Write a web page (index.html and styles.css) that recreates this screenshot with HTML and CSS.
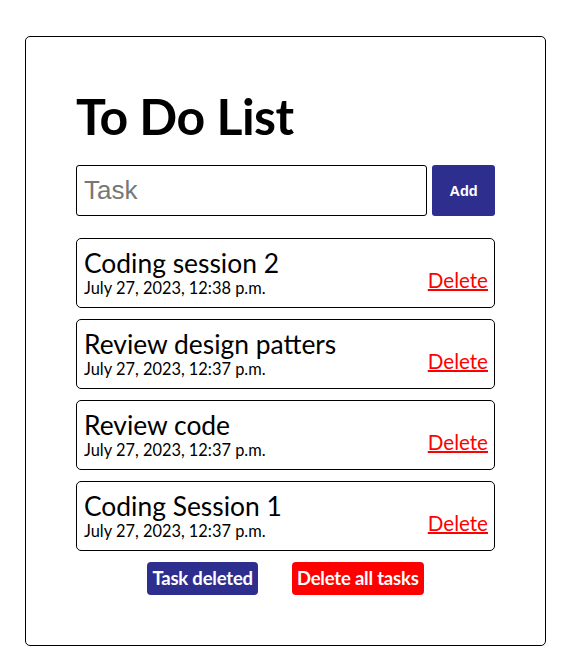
FILE: index.html
```html
<!DOCTYPE html>
<html>
<head>
<meta charset="utf-8">
<link rel="stylesheet" href="styles.css">
</head>
<body>
<div class="card">
  <h1 class="title">To Do List</h1>
  <form class="add-form">
    <input class="task-input" type="text" placeholder="Task">
    <button class="add-btn" type="button">Add</button>
  </form>
  <ul class="tasks">
    <li class="task">
      <div class="task-info">
        <div class="task-name">Coding session 2</div>
        <div class="task-date">July 27, 2023, 12:38 p.m.</div>
      </div>
      <a class="delete" href="#">Delete</a>
    </li>
    <li class="task">
      <div class="task-info">
        <div class="task-name">Review design patters</div>
        <div class="task-date">July 27, 2023, 12:37 p.m.</div>
      </div>
      <a class="delete" href="#">Delete</a>
    </li>
    <li class="task">
      <div class="task-info">
        <div class="task-name">Review code</div>
        <div class="task-date">July 27, 2023, 12:37 p.m.</div>
      </div>
      <a class="delete" href="#">Delete</a>
    </li>
    <li class="task">
      <div class="task-info">
        <div class="task-name">Coding Session 1</div>
        <div class="task-date">July 27, 2023, 12:37 p.m.</div>
      </div>
      <a class="delete" href="#">Delete</a>
    </li>
  </ul>
  <div class="actions">
    <span class="badge badge-blue">Task deleted</span>
    <span class="badge badge-red">Delete all tasks</span>
  </div>
</div>
</body>
</html>
```
FILE: styles.css
```css
html, body {
  margin: 0;
  padding: 0;
  background: #fff;
}
body {
  font-family: Lato, "Noto Sans", sans-serif;
  color: #000;
  padding: 36px 0 0 25px;
}
.card {
  box-sizing: border-box;
  width: 521px;
  height: 610px;
  border: 1px solid #000;
  border-radius: 5px;
  padding: 47px 50px 0 50px;
}
.title {
  margin: 0;
  font-size: 50px;
  font-weight: 700;
  line-height: 64px;
  letter-spacing: -0.5px;
}
.add-form {
  display: flex;
  gap: 5px;
  margin-top: 17px;
}
.task-input {
  box-sizing: border-box;
  flex: 1;
  height: 51px;
  border: 1px solid #000;
  border-radius: 3px;
  padding: 0 7px;
  font-family: "Liberation Sans", Arial, sans-serif;
  font-size: 26px;
  outline: none;
}
.task-input::placeholder {
  color: #777;
}
.add-btn {
  width: 63px;
  height: 51px;
  border: none;
  border-radius: 3px;
  background: #2e2e8f;
  color: #fff;
  font-family: "Liberation Sans", Arial, sans-serif;
  font-weight: 700;
  font-size: 14.5px;
}
.tasks {
  list-style: none;
  margin: 22px 0 0 0;
  padding: 0;
  display: flex;
  flex-direction: column;
  gap: 11px;
}
.task {
  box-sizing: border-box;
  height: 70px;
  border: 1px solid #000;
  border-radius: 5px;
  padding: 9px 6px 0 7px;
  display: flex;
  justify-content: space-between;
  align-items: flex-start;
}
.task-name {
  font-size: 26.4px;
  line-height: 30px;
}
.task-date {
  font-size: 16.4px;
  line-height: 20px;
}
.delete {
  color: #f00;
  font-size: 20.6px;
  margin-top: 20px;
  text-decoration: underline;
  text-decoration-thickness: 2px;
}
.actions {
  display: flex;
  justify-content: center;
  gap: 34px;
  margin-top: 11px;
}
.badge {
  display: inline-block;
  height: 33px;
  line-height: 33px;
  padding: 0 5px;
  border-radius: 4px;
  color: #fff;
  font-weight: 700;
  font-size: 18.5px;
  letter-spacing: -0.2px;
}
.badge-blue {
  background: #2e2e8f;
}
.badge-red {
  background: #f00;
}
```
